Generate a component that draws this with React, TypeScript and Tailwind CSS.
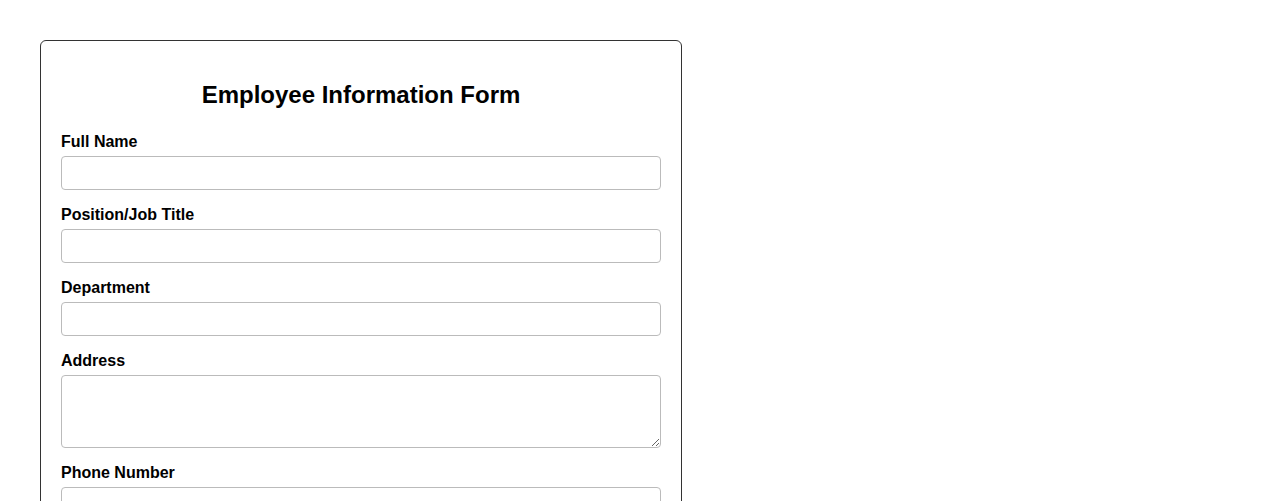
import React from "react";

const Field = ({ label, area }: { label: string; area?: boolean }) => (
  <div>
    <label className="block mb-[4.5px] text-[16px] font-bold leading-[18.4px] text-black">{label}</label>
    {area ? (
      <textarea className="block w-[600px] h-[73px] mb-[16.1px] border border-[#bbb] rounded-[4px] px-2 py-2 text-[14px] bg-white" />
    ) : (
      <input
        type="text"
        className="block w-[600px] h-[34px] mb-[16.1px] border border-[#bbb] rounded-[4px] px-2 text-[14px] bg-white"
      />
    )}
  </div>
);

export default function App() {
  return (
    <div className="p-10 bg-white min-h-screen" style={{ fontFamily: '"Liberation Sans", Arial, sans-serif' }}>
      <div className="w-[642px] border border-[#333] rounded-[6px] p-5">
        <h2 className="text-center text-[24px] font-bold leading-[27.6px] mt-[19.5px] mb-[25px] text-black">
          Employee Information Form
        </h2>
        <Field label="Full Name" />
        <Field label="Position/Job Title" />
        <Field label="Department" />
        <Field label="Address" area />
        <Field label="Phone Number" />
      </div>
    </div>
  );
}
